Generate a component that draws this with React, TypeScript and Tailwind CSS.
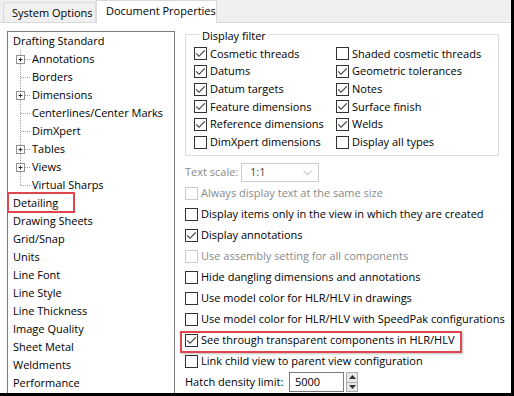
import React from 'react';

const FONT = "font-['Open_Sans','Noto_Sans',sans-serif]";

function Check({ checked, disabled }: { checked?: boolean; disabled?: boolean }) {
  return (
    <span
      className={`w-[13px] h-[13px] shrink-0 border bg-white flex items-center justify-center ${
        disabled ? 'border-[#cccccc]' : 'border-[#333333]'
      }`}
    >
      {checked && (
        <svg width="11" height="11" viewBox="0 0 11 11">
          <path d="M1.2 5.4 L4 8.3 L9.8 2.3" fill="none" stroke="#333" strokeWidth="1.1" />
        </svg>
      )}
    </span>
  );
}

function Option({ label, checked, disabled }: { label: string; checked?: boolean; disabled?: boolean }) {
  return (
    <div className="flex items-center gap-[3px] whitespace-nowrap">
      <Check checked={checked} disabled={disabled} />
      <span className={disabled ? 'text-[#8a8a8a]' : 'text-black'}>{label}</span>
    </div>
  );
}

type TreeItem = { label: string; child?: boolean; expand?: boolean; last?: boolean; marked?: boolean };

const tree: TreeItem[] = [
  { label: 'Drafting Standard' },
  { label: 'Annotations', child: true, expand: true },
  { label: 'Borders', child: true },
  { label: 'Dimensions', child: true, expand: true },
  { label: 'Centerlines/Center Marks', child: true },
  { label: 'DimXpert', child: true },
  { label: 'Tables', child: true, expand: true },
  { label: 'Views', child: true, expand: true },
  { label: 'Virtual Sharps', child: true, last: true },
  { label: 'Detailing', marked: true },
  { label: 'Drawing Sheets' },
  { label: 'Grid/Snap' },
  { label: 'Units' },
  { label: 'Line Font' },
  { label: 'Line Style' },
  { label: 'Line Thickness' },
  { label: 'Image Quality' },
  { label: 'Sheet Metal' },
  { label: 'Weldments' },
  { label: 'Performance' },
];

function Connector({ expand, last }: { expand?: boolean; last?: boolean }) {
  return (
    <svg width="19" height="18" viewBox="0 0 19 18" className="shrink-0">
      <line x1="7.5" y1="0" x2="7.5" y2={last ? 9 : 18} stroke="#a0a0a0" strokeDasharray="1 1" />
      <line x1={expand ? 12 : 8} y1="9.5" x2="18" y2="9.5" stroke="#a0a0a0" strokeDasharray="1 1" />
      {expand && (
        <g>
          <rect x="3.5" y="5.5" width="8" height="8" fill="#fff" stroke="#919191" />
          <line x1="5.5" y1="9.5" x2="9.5" y2="9.5" stroke="#333" />
          <line x1="7.5" y1="7.5" x2="7.5" y2="11.5" stroke="#333" />
        </g>
      )}
    </svg>
  );
}

const filterLeft = [
  { label: 'Cosmetic threads', checked: true },
  { label: 'Datums', checked: true },
  { label: 'Datum targets', checked: true },
  { label: 'Feature dimensions', checked: true },
  { label: 'Reference dimensions', checked: true },
  { label: 'DimXpert dimensions', checked: false },
];
const filterRight = [
  { label: 'Shaded cosmetic threads', checked: false },
  { label: 'Geometric tolerances', checked: true },
  { label: 'Notes', checked: true },
  { label: 'Surface finish', checked: true },
  { label: 'Welds', checked: true },
  { label: 'Display all types', checked: false },
];

const options = [
  { label: 'Always display text at the same size', disabled: true },
  { label: 'Display items only in the view in which they are created' },
  { label: 'Display annotations', checked: true },
  { label: 'Use assembly setting for all components', disabled: true },
  { label: 'Hide dangling dimensions and annotations' },
  { label: 'Use model color for HLR/HLV in drawings' },
  { label: 'Use model color for HLR/HLV with SpeedPak configurations' },
  { label: 'See through transparent components in HLR/HLV', checked: true, marked: true },
  { label: 'Link child view to parent view configuration' },
];

export default function App() {
  return (
    <div
      className={`w-[514px] h-[396px] bg-white border-r-[3px] border-b-[3px] border-black flex flex-col overflow-hidden ${FONT} text-[11px] text-black`}
    >
      {/* tab strip */}
      <div className="h-[23px] shrink-0 bg-[#f0f0f0] border-b border-[#d9d9d9] flex items-end pl-[3px]">
        <div className="h-[20px] w-[93px] border border-b-0 border-[#d9d9d9] bg-[#f0f0f0] flex items-center pl-[8px] pt-[1px]">
          System Options
        </div>
        <div className="relative -mb-px h-[23px] w-[121px] border border-b-0 border-[#d9d9d9] bg-white flex items-center pl-[9px] pb-[1px]">
          Document Properties
        </div>
      </div>

      <div className="flex flex-1 min-h-0">
        {/* tree */}
        <div className="ml-[7px] mt-[8px] w-[168px] border border-b-0 border-[#7a7a7a] pl-[5px] leading-[18px]">
          {tree.map((t) => (
            <div key={t.label} className="h-[18px] flex items-center whitespace-nowrap">
              {t.child && <Connector expand={t.expand} last={t.last} />}
              <span className="relative">
                {t.label}
                {t.marked && (
                  <span className="absolute left-[-6px] top-[-2px] w-[68px] h-[21px] border-2 border-[#e0474c]" />
                )}
              </span>
            </div>
          ))}
        </div>

        {/* settings */}
        <div className="ml-[10px] w-[314px] flex flex-col">
          <fieldset className="mt-[2px] border border-[#dcdcdc] pl-[8px] pt-[2px] pb-[4px]">
            <legend className="ml-[6px] px-[2px] leading-[18px]">
              <span className="relative top-[2px]">Display filter</span>
            </legend>
            <div className="grid grid-cols-[142px_1fr] auto-rows-[17.7px] items-center">
              {filterLeft.map((f, i) => (
                <React.Fragment key={f.label}>
                  <Option label={f.label} checked={f.checked} />
                  <Option label={filterRight[i].label} checked={filterRight[i].checked} />
                </React.Fragment>
              ))}
            </div>
          </fieldset>

          <div className="mt-[7px] h-[19px] flex items-center">
            <span className="text-[#8a8a8a] w-[56px]">Text scale:</span>
            <div className="w-[78px] h-[19px] border border-[#cccccc] flex items-center justify-between pl-[8px] pr-[6px]">
              <span className="text-[#4a4a4a]">1:1</span>
              <svg width="9" height="6" viewBox="0 0 9 6">
                <path d="M0.5 0.8 L4.5 4.8 L8.5 0.8" fill="none" stroke="#a8a8a8" />
              </svg>
            </div>
          </div>

          <div className="mt-[1px] flex flex-col">
            {options.map((o) => (
              <div key={o.label} className="relative h-[21px] flex items-center">
                <Option label={o.label} checked={o.checked} disabled={o.disabled} />
                {o.marked && (
                  <span className="absolute left-[-5px] top-[1px] w-[282px] h-[22px] border-2 border-[#e0474c] shadow-[1px_1px_2px_rgba(0,0,0,0.25)]" />
                )}
              </div>
            ))}
          </div>

          <div className="h-[20px] flex items-center">
            <span className="w-[104px]">Hatch density limit:</span>
            <div className="w-[55px] h-[20px] border border-[#7a7a7a] flex items-center pl-[5px]">5000</div>
            <div className="ml-[2px] w-[12px] h-[20px] flex flex-col">
              <div className="flex-1 border border-[#adadad] bg-[#e8e8e8] flex items-center justify-center">
                <svg width="7" height="4" viewBox="0 0 7 4">
                  <path d="M0 4 L3.5 0 L7 4 Z" fill="#333" />
                </svg>
              </div>
              <div className="flex-1 border border-t-0 border-[#adadad] bg-[#e8e8e8] flex items-center justify-center">
                <svg width="7" height="4" viewBox="0 0 7 4">
                  <path d="M0 0 L3.5 4 L7 0 Z" fill="#333" />
                </svg>
              </div>
            </div>
          </div>
        </div>
      </div>
    </div>
  );
}
